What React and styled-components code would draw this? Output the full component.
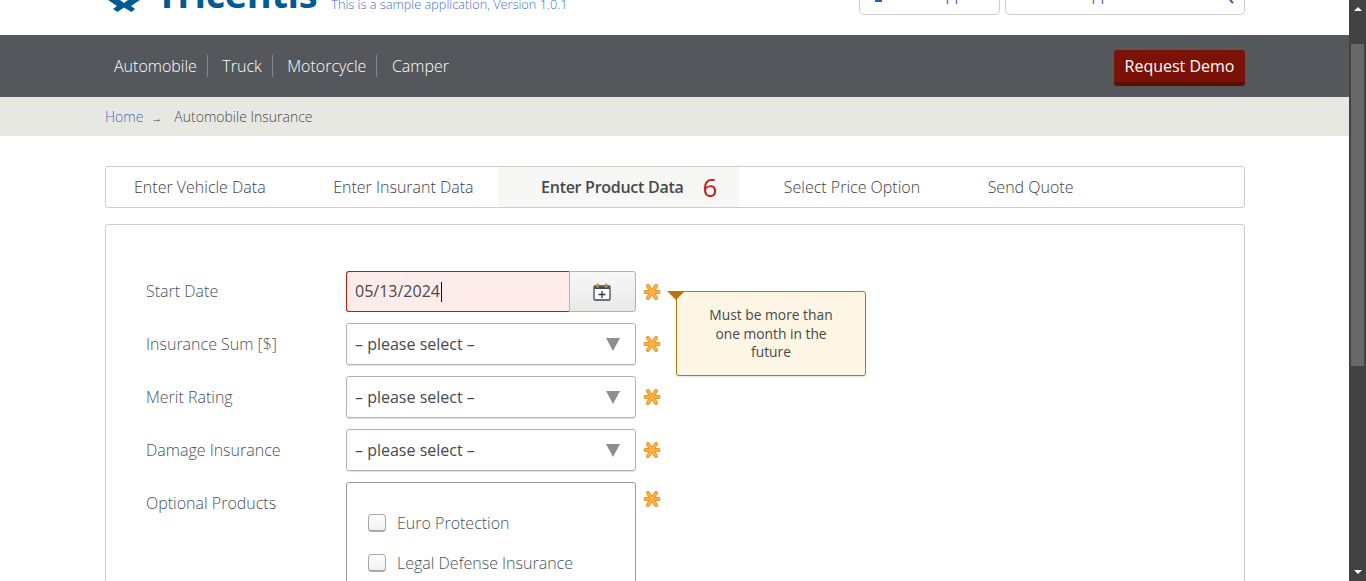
import React from 'react';
import styled, { createGlobalStyle } from 'styled-components';

const GlobalStyle = createGlobalStyle`
  html, body {
    margin: 0;
    padding: 0;
    height: 581px;
    overflow: hidden;
    background: #fff;
    font-family: "Open Sans", "Liberation Sans", sans-serif;
  }
  * { box-sizing: border-box; }
`;

const Screen = styled.div`
  display: flex;
  width: 1366px;
  height: 581px;
  overflow: hidden;
`;

const Page = styled.div`
  width: 1349px;
  height: 581px;
  overflow: hidden;
`;

const ScrollTrack = styled.div`
  width: 17px;
  height: 581px;
  background: #424242;
  display: flex;
  flex-direction: column;
  align-items: center;
`;

const ScrollArrow = styled.div`
  width: 0;
  height: 0;
  border-left: 4px solid transparent;
  border-right: 4px solid transparent;
  margin-top: ${(p) => p.$top}px;
  ${(p) => (p.$down ? 'border-top: 4px solid #fff;' : 'border-bottom: 4px solid #fff;')}
`;

const ScrollThumb = styled.div`
  width: 13px;
  height: 322px;
  margin-top: 33px;
  background: #686868;
`;

const Header = styled.header`
  height: 35px;
  padding: 0 104px 0 105px;
  display: flex;
  justify-content: space-between;
  overflow: hidden;
`;

const Brand = styled.div`
  display: flex;
  align-items: flex-start;
  height: 35px;
`;

const BrandName = styled.div`
  margin: -36px 0 0 15px;
  font-size: 38px;
  line-height: 58px;
  font-weight: 700;
  color: #005b94;
  letter-spacing: -0.4px;
`;

const BrandNote = styled.div`
  margin: -4px 0 0 14px;
  font-size: 12.75px;
  line-height: 16px;
  font-weight: 300;
  color: #3f6fc4;
`;

const HeaderTools = styled.div`
  display: flex;
  gap: 5px;
  align-items: flex-start;
`;

const HeaderBox = styled.div`
  width: ${(p) => p.$width}px;
  height: 15px;
  padding: 0 9px 0 ${(p) => p.$indent}px;
  border: 1px solid #ccc;
  border-top: 0;
  border-radius: 0 0 5px 5px;
  font-size: 15px;
  line-height: 20px;
  color: #3f6fc4;
  overflow: hidden;
  display: flex;
  align-items: flex-start;
`;

const HeaderText = styled.span`
  margin-left: ${(p) => p.$left}px;
  margin-top: -16px;
  display: block;
`;

const UserFoot = styled.span`
  width: 7px;
  height: 2px;
  background: #1f63b5;
`;

const SearchHandle = styled.svg`
  width: 6px;
  height: 4px;
  margin-left: auto;
`;

const NavBar = styled.nav`
  height: 62px;
  padding: 0 104px 0 105px;
  background: #54575c;
  display: flex;
  align-items: center;
  justify-content: space-between;
`;

const NavList = styled.div`
  display: flex;
  align-items: center;
`;

const NavItem = styled.a`
  padding: 0 10px 0 ${(p) => (p.$first ? 9 : 14.5)}px;
  height: 22px;
  font-size: 16px;
  line-height: 22px;
  font-weight: 300;
  color: #fff;
  border-right: ${(p) => (p.$last ? '0' : '1px solid #85888c')};
`;

const DemoButton = styled.button`
  align-self: flex-start;
  width: 131px;
  height: 36px;
  margin-top: 15px;
  padding: 0;
  border: 0;
  border-bottom: 4px solid #5e0d05;
  border-radius: 3px;
  background: #7b1208;
  font-family: inherit;
  font-size: 16px;
  line-height: 32px;
  color: #fff;
`;

const Breadcrumb = styled.div`
  height: 39px;
  padding: 0 105px;
  background: #e8e8e3;
  display: flex;
  align-items: center;
  font-size: 14px;
  font-weight: 300;
  color: #45494d;
`;

const CrumbLink = styled.a`
  color: #4468bf;
`;

const CrumbArrow = styled.span`
  margin: 2px 13px 0 8px;
  font-size: 11px;
  width: 10px;
`;

const Content = styled.main`
  padding: 30px 104px 0 105px;
`;

const Steps = styled.div`
  height: 42px;
  border: 1px solid #ccc;
  border-radius: 3px;
  display: flex;
  margin-bottom: 16px;
`;

const Step = styled.a`
  display: flex;
  align-items: center;
  height: 40px;
  padding: 0 ${(p) => (p.$active ? 23 : 24)}px 0 ${(p) => (p.$first ? 28 : 43.5)}px;
  background: ${(p) => (p.$active ? '#f7f7f5' : 'transparent')};
  font-size: 16px;
  font-weight: ${(p) => (p.$active ? 600 : 300)};
  letter-spacing: ${(p) => (p.$active ? '-0.28px' : '0')};
  color: ${(p) => (p.$active ? '#45494d' : '#3c4247')};
`;

const StepCount = styled.span`
  margin-left: 19px;
  font-size: 26px;
  line-height: 36px;
  font-weight: 500;
  letter-spacing: 0;
  color: #c41a12;
`;

const Card = styled.section`
  height: 400px;
  padding: 46px 40px 0;
  border: 1px solid #ccc;
  border-radius: 3px;
`;

const Row = styled.div`
  position: relative;
  display: flex;
  align-items: ${(p) => (p.$top ? 'flex-start' : 'center')};
  margin-bottom: 11px;
`;

const Label = styled.label`
  width: 200px;
  font-size: 16px;
  font-weight: 300;
  line-height: 22px;
  color: #47535b;
  ${(p) => p.$top && 'margin-top: 10px;'}
  ${(p) => p.$raised && 'margin-top: -2px;'}
`;

const DateGroup = styled.div`
  width: 290px;
  height: 41px;
  display: flex;
`;

const DateInput = styled.div`
  flex: 1;
  padding-left: 8px;
  border: 1px solid #c4170f;
  border-right: 0;
  border-radius: 3px 0 0 3px;
  background: #feeceb;
  font-size: 16px;
  line-height: 38px;
  color: #45494d;
  display: flex;
`;

const Caret = styled.span`
  width: 1px;
  height: 20px;
  margin: 10px 0 0 1px;
  background: #111;
`;

const DateButton = styled.div`
  width: 67px;
  padding-right: 2px;
  border: 1px solid #b3b3b3;
  border-radius: 0 3px 3px 0;
  background: linear-gradient(#f8f8f8, #e8e8e6);
  display: flex;
  align-items: center;
  justify-content: center;
`;

const Select = styled.div`
  width: 290px;
  height: 42px;
  padding: 0 15px 0 8px;
  border: 1px solid #b3b3b3;
  border-radius: 3px;
  box-shadow: 0 1px 1px rgba(0, 0, 0, 0.12);
  display: flex;
  align-items: center;
  justify-content: space-between;
  font-size: 16px;
  color: #45494d;
`;

const SelectArrow = styled.span`
  width: 0;
  height: 0;
  border-left: 7px solid transparent;
  border-right: 7px solid transparent;
  border-top: 13px solid #8e8e8e;
`;

const Required = styled.svg`
  width: 18px;
  height: 18px;
  margin-left: 7px;
  ${(p) => p.$top && 'margin-top: 8px;'}
`;

const CheckGroup = styled.div`
  width: 290px;
  height: 200px;
  padding: 29px 21px;
  border: 1px solid #999;
  border-radius: 3px;
  display: flex;
  flex-direction: column;
  gap: 18px;
`;

const CheckRow = styled.div`
  display: flex;
  align-items: center;
  height: 22px;
  font-size: 16px;
  font-weight: 300;
  color: #47535b;
`;

const CheckBox = styled.span`
  width: 18px;
  height: 18px;
  margin-right: 11px;
  border: 1px solid #a8a8a8;
  border-bottom-width: 2px;
  border-radius: 4px;
  background: linear-gradient(#fff, #f1f1f1);
`;

const Tooltip = styled.div`
  position: absolute;
  left: 530px;
  top: 20px;
  width: 190px;
  height: 85px;
  padding: 14px 20px 0;
  background: #fef6e5;
  border: 1px solid #b8770a;
  border-radius: 3px;
  box-shadow: 0 1px 2px rgba(0, 0, 0, 0.12);
  text-align: center;
  font-size: 13.8px;
  line-height: 18.5px;
  color: #45494d;

  &::before {
    content: '';
    position: absolute;
    left: -10px;
    top: -1px;
    border-left: 9px solid transparent;
    border-right: 9px solid transparent;
    border-top: 9px solid #b8770a;
  }
`;

function Star({ top }) {
  return (
    <Required $top={top} viewBox="0 0 18 18">
      <g stroke="#e58a1a" strokeWidth="4" strokeLinecap="round">
        <line x1="2.5" y1="9" x2="15.5" y2="9" />
        <line x1="5" y1="3" x2="13" y2="15" />
        <line x1="13" y1="3" x2="5" y2="15" />
      </g>
      <g stroke="#fbb040" strokeWidth="2.6" strokeLinecap="round">
        <line x1="2.5" y1="9" x2="15.5" y2="9" />
        <line x1="5" y1="3" x2="13" y2="15" />
        <line x1="13" y1="3" x2="5" y2="15" />
      </g>
    </Required>
  );
}

function LogoMark() {
  return (
    <svg width="36" height="12" viewBox="0 0 36 12" style={{ display: 'block', flex: 'none' }}>
      <path d="M3 0H15L19 3L23 0H35L26 6L30 9L26.500 12L19 7.500L12.500 12L8 9L12 6Z" fill="#005b94" />
    </svg>
  );
}

function CalendarIcon() {
  return (
    <svg width="18" height="18" viewBox="0 0 18 18">
      <rect x="1" y="3" width="16" height="14" rx="1" fill="#fff" stroke="#3e4a57" strokeWidth="1.300" />
      <rect x="1.500" y="3.500" width="15" height="2.500" fill="#3e4a57" />
      <rect x="3.500" y="0.500" width="2.400" height="4.500" rx="1" fill="#c48a3c" />
      <rect x="12" y="0.500" width="2.400" height="4.500" rx="1" fill="#c48a3c" />
      <path d="M9 8V15M5.500 11.500H12.500" stroke="#333a44" strokeWidth="1.300" />
    </svg>
  );
}

const selects = ['Insurance Sum [$]', 'Merit Rating', 'Damage Insurance'];

export default function App() {
  return (
    <Screen>
      <GlobalStyle />
      <Page>
        <Header>
          <Brand>
            <LogoMark />
            <BrandName>Tricentis</BrandName>
            <BrandNote>This is a sample application, Version 1.0.1</BrandNote>
          </Brand>
          <HeaderTools>
            <HeaderBox $width={141} $indent={15}>
              <UserFoot />
              <HeaderText $left={46}>Support</HeaderText>
            </HeaderBox>
            <HeaderBox $width={240} $indent={68}>
              <HeaderText $left={0}>Support</HeaderText>
              <SearchHandle viewBox="0 0 6 4">
                <path d="M1 0L4 3" stroke="#1f63b5" strokeWidth="2" />
              </SearchHandle>
            </HeaderBox>
          </HeaderTools>
        </Header>

        <NavBar>
          <NavList>
            <NavItem $first>Automobile</NavItem>
            <NavItem>Truck</NavItem>
            <NavItem>Motorcycle</NavItem>
            <NavItem $last>Camper</NavItem>
          </NavList>
          <DemoButton>Request Demo</DemoButton>
        </NavBar>

        <Breadcrumb>
          <CrumbLink>Home</CrumbLink>
          <CrumbArrow>→</CrumbArrow>
          <span>Automobile Insurance</span>
        </Breadcrumb>

        <Content>
          <Steps>
            <Step $first>Enter Vehicle Data</Step>
            <Step>Enter Insurant Data</Step>
            <Step $active>
              Enter Product Data<StepCount>6</StepCount>
            </Step>
            <Step>Select Price Option</Step>
            <Step>Send Quote</Step>
          </Steps>

          <Card>
            <Row>
              <Label $raised>Start Date</Label>
              <DateGroup>
                <DateInput>
                  05/13/2024<Caret />
                </DateInput>
                <DateButton>
                  <CalendarIcon />
                </DateButton>
              </DateGroup>
              <Star />
              <Tooltip>Must be more than one month in the future</Tooltip>
            </Row>
            {selects.map((name) => (
              <Row key={name}>
                <Label>{name}</Label>
                <Select>
                  – please select –<SelectArrow />
                </Select>
                <Star />
              </Row>
            ))}
            <Row $top>
              <Label $top>Optional Products</Label>
              <CheckGroup>
                <CheckRow>
                  <CheckBox />
                  Euro Protection
                </CheckRow>
                <CheckRow>
                  <CheckBox />
                  Legal Defense Insurance
                </CheckRow>
              </CheckGroup>
              <Star top />
            </Row>
          </Card>
        </Content>
      </Page>
      <ScrollTrack>
        <ScrollArrow $top={7} />
        <ScrollThumb />
        <ScrollArrow $down $top={204} />
      </ScrollTrack>
    </Screen>
  );
}
